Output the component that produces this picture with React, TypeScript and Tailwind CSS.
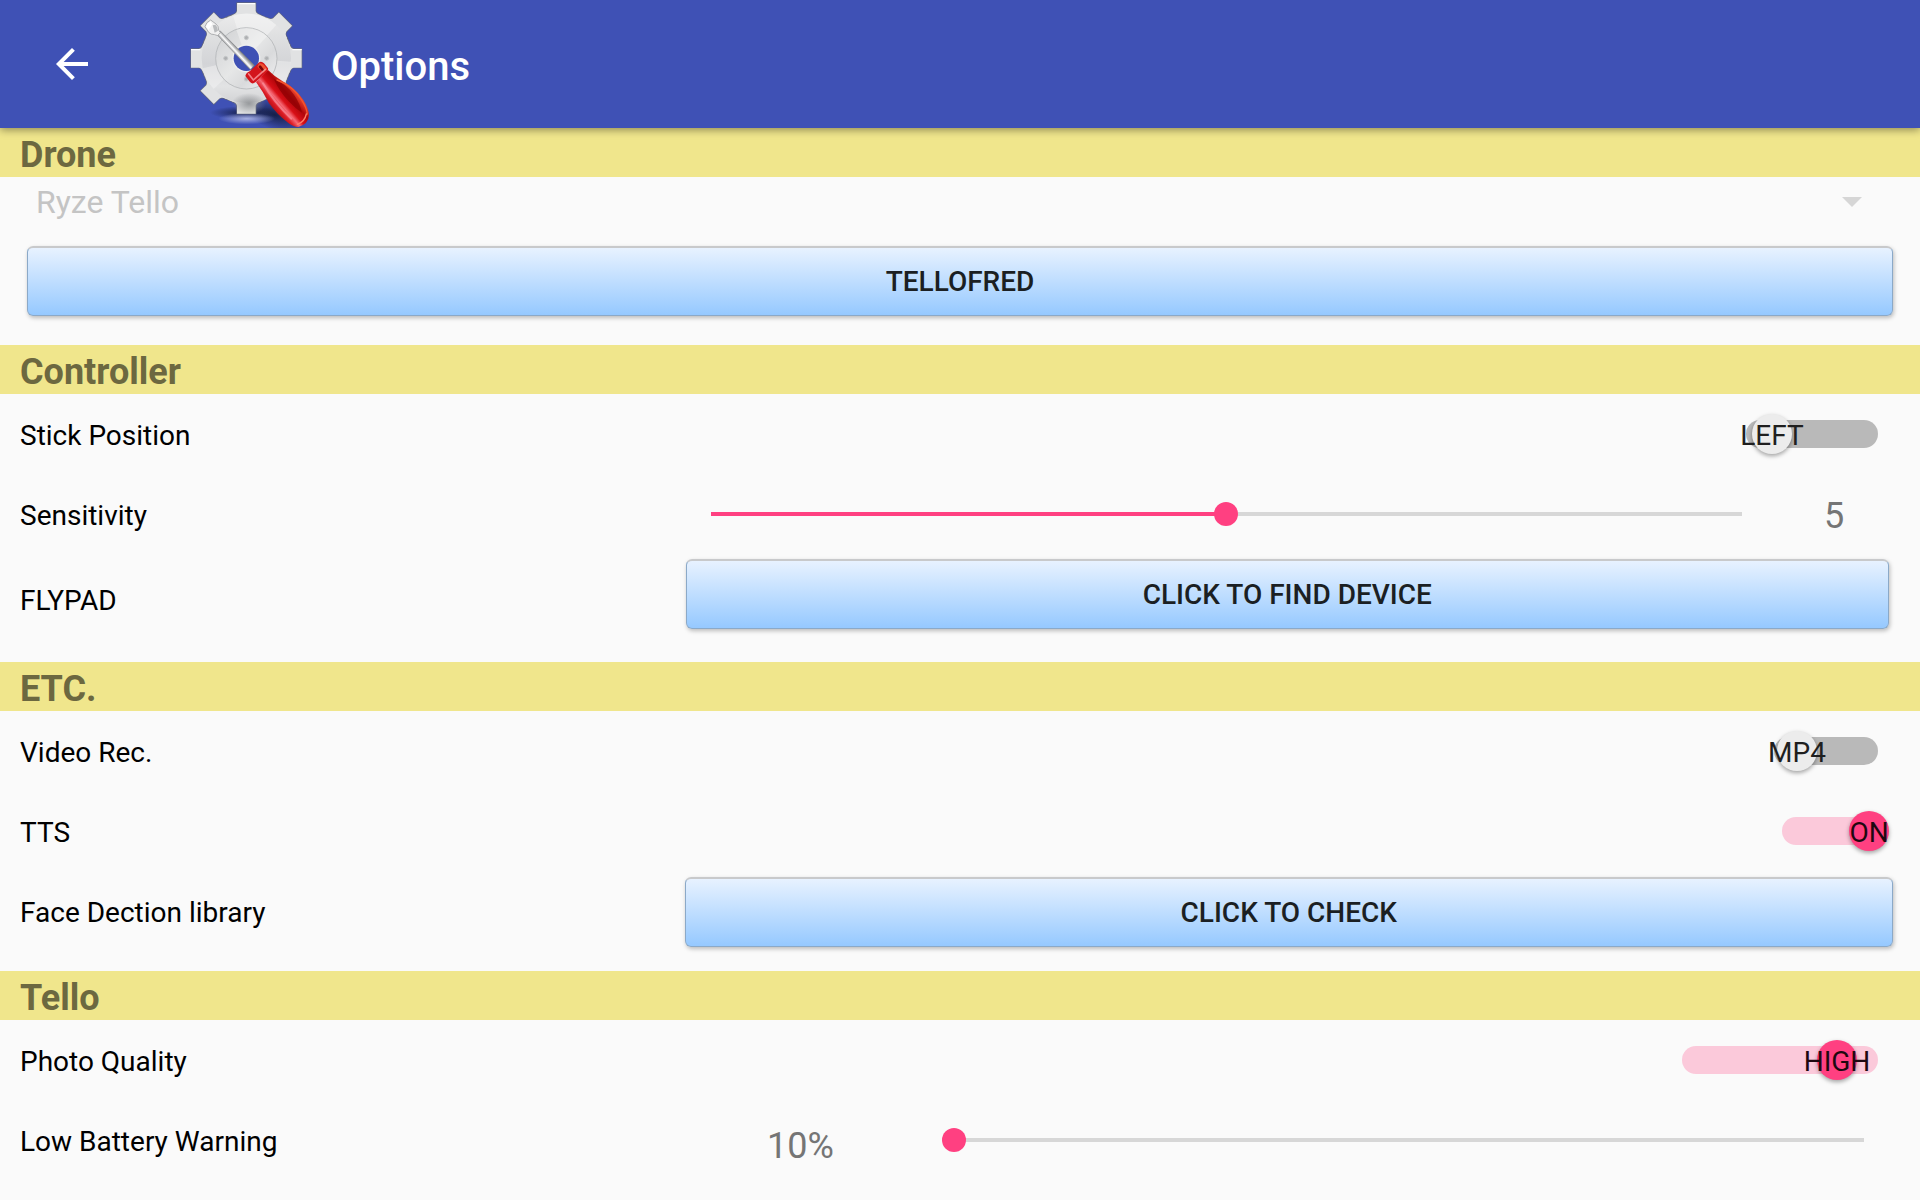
import React, { useId, useState } from "react";

const GEAR_ANGLES = [0, 45, 90, 135, 180, 225, 270, 315];

function GearLogo() {
  return (
    <svg viewBox="0 0 420 384" className="h-32 w-[140px] shrink-0" aria-hidden="true">
      <defs>
        <linearGradient id="metal" x1="0" y1="-167" x2="0" y2="167" gradientUnits="userSpaceOnUse">
          <stop offset="0" stopColor="#f1f1f1" />
          <stop offset="0.3" stopColor="#dfe0e1" />
          <stop offset="0.55" stopColor="#d3d4d7" />
          <stop offset="0.75" stopColor="#e2e3e4" />
          <stop offset="0.93" stopColor="#cfd0d2" />
          <stop offset="1" stopColor="#d9dadb" />
        </linearGradient>
        <linearGradient id="disc" x1="-80" y1="-60" x2="70" y2="80" gradientUnits="userSpaceOnUse">
          <stop offset="0" stopColor="#d4d5d7" />
          <stop offset="0.45" stopColor="#e6e7e7" />
          <stop offset="0.7" stopColor="#d9dadc" />
          <stop offset="1" stopColor="#ededee" />
        </linearGradient>
        <linearGradient id="shaft" x1="156" y1="156" x2="170" y2="143" gradientUnits="userSpaceOnUse">
          <stop offset="0" stopColor="#77797c" />
          <stop offset="0.5" stopColor="#ffffff" />
          <stop offset="1" stopColor="#8b8d90" />
        </linearGradient>
        <linearGradient id="handle" x1="272" y1="325" x2="338" y2="268" gradientUnits="userSpaceOnUse">
          <stop offset="0" stopColor="#a80a10" />
          <stop offset="0.2" stopColor="#dc1c25" />
          <stop offset="0.36" stopColor="#f56a76" />
          <stop offset="0.5" stopColor="#d80f17" />
          <stop offset="0.75" stopColor="#b0060a" />
          <stop offset="1" stopColor="#e8412c" />
        </linearGradient>
        <radialGradient id="glow">
          <stop offset="0" stopColor="#b9c1ea" stopOpacity="0.85" />
          <stop offset="1" stopColor="#b9c1ea" stopOpacity="0" />
        </radialGradient>
        <radialGradient id="dark">
          <stop offset="0" stopColor="#101838" stopOpacity="0.85" />
          <stop offset="1" stopColor="#101838" stopOpacity="0" />
        </radialGradient>
        <radialGradient id="smudge">
          <stop offset="0" stopColor="#85888b" stopOpacity="0.8" />
          <stop offset="1" stopColor="#85888b" stopOpacity="0" />
        </radialGradient>
        <mask id="bore">
          <rect x="-200" y="-200" width="400" height="400" fill="white" />
          <circle r="38" fill="black" />
        </mask>
      </defs>
      <ellipse cx="195" cy="338" rx="105" ry="20" fill="url(#dark)" />
      <ellipse cx="285" cy="345" rx="100" ry="44" transform="rotate(20 285 345)" fill="url(#dark)" />
      <ellipse cx="200" cy="356" rx="85" ry="17" fill="url(#glow)" />
      <g transform="translate(199 175)" mask="url(#bore)">
        <g fill="#63687c" stroke="#63687c" strokeWidth="4" strokeLinejoin="round">
          <circle r="136" />
          {GEAR_ANGLES.map((a) => (
            <path key={a} d="M-28 -166H28V-142Q30 -133 44 -129L0 -100L-44 -129Q-30 -133 -28 -142Z" transform={`rotate(${a})`} />
          ))}
        </g>
        <circle r="136" fill="#dfe0e1" />
        <g fill="#e1e2e3">
          {GEAR_ANGLES.map((a) => (
            <path key={a} d="M-28 -166H28V-142Q30 -133 44 -129L0 -100L-44 -129Q-30 -133 -28 -142Z" transform={`rotate(${a})`} />
          ))}
        </g>
        <circle r="134" fill="url(#metal)" />
        <path d="M0 0L-40 -128A134 134 0 0 1 90 -100Z" fill="#f8f8f8" opacity="0.45" />
        <path d="M0 0L134 10A134 134 0 0 1 98 92Z" fill="#f7f7f7" opacity="0.4" />
        <path d="M0 0L-131 30A134 134 0 0 0 -98 92Z" fill="#f7f7f7" opacity="0.4" />
        <path d="M-26 -164H26M-166 -26H-138M138 -26H166" stroke="#ffffff" strokeWidth="4" />
        <circle r="92" fill="url(#disc)" stroke="#b5b7b9" strokeWidth="2.5" />
        <path d="M0 0L-30 -86A91 91 0 0 1 62 -66Z" fill="#fafafa" opacity="0.4" />
        <circle r="40" fill="none" stroke="#eeeeee" strokeWidth="4" />
        <g fill="#aeb0b2" stroke="#c6c8ca" strokeWidth="3">
          <circle cy="-62" r="6" />
          <circle cx="-62" r="6" />
          <circle cx="61" r="6" />
          <circle cy="62" r="6" />
        </g>
        <ellipse cx="8" cy="136" rx="52" ry="32" fill="url(#smudge)" />
      </g>
      <path d="M110 103L121 93L223 196L211 209Z" fill="url(#shaft)" stroke="#76787b" strokeWidth="1.5" />
      <path d="M75 80Q78 66 92 60L108 72Q116 78 116 90L121 98L113 107L104 104Q92 104 86 97Z" fill="#f1f1f1" stroke="#8f9194" strokeWidth="2" strokeLinejoin="round" />
      <path d="M78 80Q82 70 91 64L97 72L86 90Z" fill="#ffffff" />
      <path d="M98 76L104 98L114 92Q114 80 106 74Z" fill="#b9bbbd" />
      <path
        d="M228 246L264 210Q284 230 308 244Q346 264 370 300Q386 326 387 345Q386 372 355 381Q341 381 325 369Q290 342 266 308Q250 276 228 246Z"
        fill="url(#handle)"
      />
      <path d="M282 238Q318 252 342 284Q360 310 366 338Q346 326 326 304Q296 272 282 238Z" fill="#8c0003" opacity="0.7" />
      <path d="M291 240Q340 258 365 300Q380 324 382 342" fill="none" stroke="#f4552f" strokeWidth="4" strokeLinecap="round" />
      <path d="M249 250Q282 308 334 356" fill="none" stroke="#f9909c" strokeWidth="6" strokeLinecap="round" opacity="0.7" />
      <path d="M352 373Q374 366 379 342" fill="none" stroke="#ff7d66" strokeWidth="4" strokeLinecap="round" />
      <path d="M196 228Q198 218 210 213L236 188Q244 182 252 190L264 205Q266 212 258 218L226 247Q217 254 210 246Z" fill="#d3151c" />
      <path d="M238 190Q245 188 251 194L262 207L250 218L232 200Z" fill="#ef5030" />
      <path d="M240 200L248 210" stroke="#7b0206" strokeWidth="8" strokeLinecap="round" />
      <path d="M206 222L220 240L256 208" fill="none" stroke="#fa9aa0" strokeWidth="5" strokeLinecap="round" strokeLinejoin="round" opacity="0.8" />
    </svg>
  );
}

function SectionTitle({ children }: { children: React.ReactNode }) {
  return (
    <h2 className="bg-[#f0e68c] px-5 pt-1.5 pb-px text-[36px] leading-[42px] font-bold text-[#6c6840]">
      {children}
    </h2>
  );
}

function Row({ label, htmlFor, children }: { label: string; htmlFor?: string; children: React.ReactNode }) {
  const text = "w-[35.6%] shrink-0 pt-1 pl-5 text-[28px] leading-8 text-black";
  return (
    <div className="flex min-h-20 items-center">
      {htmlFor ? (
        <label htmlFor={htmlFor} className={text}>
          {label}
        </label>
      ) : (
        <span className={text}>{label}</span>
      )}
      <div className="flex min-w-0 flex-1 items-center">{children}</div>
    </div>
  );
}

function BlueButton({ children }: { children: React.ReactNode }) {
  return (
    <button
      type="button"
      className="h-[70px] w-full rounded-md border border-t-2 border-[#8ba9c8] border-t-[#c8c9cb] bg-linear-to-b from-[#eaf3ff] to-[#94c8ff] bg-origin-border text-[28px] leading-8 font-medium text-[#1b1f23] shadow-[1px_2px_4px_rgba(0,0,0,0.25)]"
    >
      {children}
    </button>
  );
}

type SwitchProps = {
  id: string;
  text: string;
  initial: boolean;
  trackClass: string;
  thumbClass: string;
};

function ToggleRow({ label, ...sw }: SwitchProps & { label: string }) {
  const [on, setOn] = useState(sw.initial);
  return (
    <Row label={label} htmlFor={sw.id}>
      <span className={`relative mr-[42px] ml-auto flex ${sw.trackClass}`}>
        <input
          id={sw.id}
          type="checkbox"
          role="switch"
          checked={on}
          onChange={() => setOn(!on)}
          className="h-7 w-full appearance-none rounded-full bg-[#b9b9b9] checked:bg-[#fbc9da]"
        />
        <span
          className={`pointer-events-none absolute -top-1.5 flex size-10 items-center justify-center rounded-full text-[28px] leading-8 whitespace-nowrap shadow-[0_2px_4px_rgba(0,0,0,0.35)] ${sw.thumbClass} ${
            on ? "bg-[#ff4081] text-[#1f0810]" : "bg-[#ececec] text-[#1f1f1f]"
          }`}
        >
          <span className="pt-1">{sw.text}</span>
        </span>
      </span>
    </Row>
  );
}

function Slider({
  id,
  value,
  min,
  max,
  onChange,
}: {
  id: string;
  value: number;
  min: number;
  max: number;
  onChange: (v: number) => void;
}) {
  const fill = ((value - min) / (max - min)) * 100;
  return (
    <input
      id={id}
      type="range"
      min={min}
      max={max}
      value={value}
      onChange={(e) => onChange(Number(e.target.value))}
      style={{ backgroundImage: `linear-gradient(to right, #ff4081 ${fill}%, #d7d7d7 ${fill}%)` }}
      className="h-6 min-w-0 flex-1 appearance-none bg-[length:calc(100%-24px)_4px] bg-center bg-no-repeat [&::-webkit-slider-thumb]:size-6 [&::-webkit-slider-thumb]:appearance-none [&::-webkit-slider-thumb]:rounded-full [&::-webkit-slider-thumb]:bg-[#ff4081]"
    />
  );
}

export default function App() {
  const uid = useId();
  const [sensitivity, setSensitivity] = useState(5);
  const [battery, setBattery] = useState(10);

  return (
    <div className="min-h-screen bg-[#fafafa] font-[Roboto,sans-serif]">
      <header className="relative flex h-32 items-center bg-[#3f51b5] pl-12 shadow-[0_2px_8px_rgba(0,0,0,0.4)]">
        <button type="button" aria-label="Back" className="mr-[84px] size-12 text-white">
          <svg viewBox="0 0 24 24" fill="currentColor" className="size-12">
            <path d="M20 11H7.83l5.59-5.59L12 4l-8 8 8 8 1.41-1.41L7.83 13H20v-2z" />
          </svg>
        </button>
        <GearLogo />
        <h1 className="pt-1.5 pl-[11px] text-[40px] leading-12 font-medium text-white">Options</h1>
      </header>

      <main>
        <section>
          <SectionTitle>Drone</SectionTitle>
          <div className="relative">
            <select
              disabled
              aria-label="Drone model"
              className="h-[49px] w-full appearance-none bg-transparent pl-9 text-[32px] leading-10 text-[#c4c4c4] opacity-100"
            >
              <option>Ryze Tello</option>
            </select>
            <svg viewBox="0 0 20 10" className="pointer-events-none absolute top-5 right-[58px] h-2.5 w-5 fill-[#d6d6d6]">
              <path d="M0 0H20L10 10Z" />
            </svg>
          </div>
          <div className="px-[27px] pt-5 pb-[29px]">
            <BlueButton>TELLOFRED</BlueButton>
          </div>
        </section>

        <section>
          <SectionTitle>Controller</SectionTitle>
          <ToggleRow label="Stick Position" id={`${uid}stick`} text="LEFT" initial={false} trackClass="w-[132px]" thumbClass="left-1.5" />
          <Row label="Sensitivity" htmlFor={`${uid}sens`}>
            <div className="flex flex-1 items-center pr-1.5 pl-[15px]">
              <Slider id={`${uid}sens`} value={sensitivity} min={0} max={10} onChange={setSensitivity} />
              <output className="w-40 pt-1 text-center text-[36px] leading-10 text-[#757575]">{sensitivity}</output>
            </div>
          </Row>
          <div className="pb-[18px]">
            <Row label="FLYPAD">
              <div className="flex-1 pt-[5px] pr-[31px] pb-[15px] pl-0.5">
                <BlueButton>CLICK TO FIND DEVICE</BlueButton>
              </div>
            </Row>
          </div>
        </section>

        <section>
          <SectionTitle>ETC.</SectionTitle>
          <ToggleRow label="Video Rec." id={`${uid}video`} text="MP4" initial={false} trackClass="w-[104px]" thumbClass="left-[3px]" />
          <ToggleRow label="TTS" id={`${uid}tts`} text="ON" initial={true} trackClass="w-24" thumbClass="-right-[11px]" />
          <div className="pb-5">
            <Row label="Face Dection library">
              <div className="flex-1 pt-0.5 pr-[27px] pl-px">
                <BlueButton>CLICK TO CHECK</BlueButton>
              </div>
            </Row>
          </div>
        </section>

        <section>
          <SectionTitle>Tello</SectionTitle>
          <ToggleRow label="Photo Quality" id={`${uid}photo`} text="HIGH" initial={true} trackClass="w-49" thumbClass="right-[21px]" />
          <Row label="Low Battery Warning" htmlFor={`${uid}battery`}>
            <div className="flex flex-1 items-center pr-11">
              <output className="mr-6 w-[234px] pt-3 text-center text-[36px] leading-10 text-[#757575]">{battery}%</output>
              <Slider id={`${uid}battery`} value={battery} min={10} max={50} onChange={setBattery} />
            </div>
          </Row>
        </section>
      </main>
    </div>
  );
}
